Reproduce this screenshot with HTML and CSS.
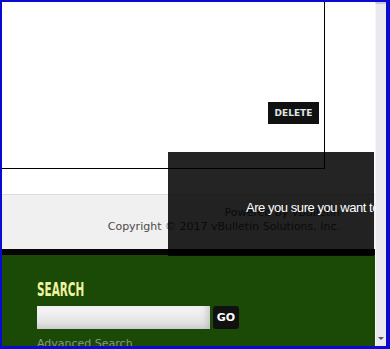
FILE: index.html
```html
<!DOCTYPE html>
<html lang="en">
<head>
    <meta charset="UTF-8">
    <title>Forum - Delete</title>
    <link rel="stylesheet" href="styles.css">
</head>
<body>
    <div class="frame">
        <div class="page">
            <div class="main-area">
                <div class="post-box">
                    <button class="delete-button">DELETE</button>
                </div>
            </div>
            <div class="footer-light">
                <div class="footer-line">Powered by vBulletin</div>
                <div class="footer-line">Copyright &copy; 2017 vBulletin Solutions, Inc.</div>
            </div>
            <div class="footer-band"></div>
            <div class="footer-green">
                <div class="search-title">SEARCH</div>
                <div class="search-row">
                    <input type="text" class="search-input">
                    <button class="go-button">GO</button>
                </div>
                <div class="adv-search">Advanced Search</div>
            </div>
            <!-- confirm dialog sits over the page -->
            <div class="confirm-overlay">
                <div class="confirm-text">Are you sure you want to delete this message?</div>
            </div>
        </div>
        <div class="scrollbar">
            <div class="scroll-arrow"></div>
        </div>
    </div>
</body>
</html>
```

FILE: styles.css
```css
body {
    margin: 0;
    padding: 0;
    font-family: "DejaVu Sans", Verdana, sans-serif;
    background: #ffffff;
}
.frame {
    width: 390px;
    height: 349px;
    box-sizing: border-box;
    border-style: solid;
    border-color: #0a0ad2;
    border-width: 2px 4px 3px 2px;
    display: flex;
    overflow: hidden;
}
.page {
    position: relative;
    width: 373px;
    height: 344px;
    overflow: hidden;
    display: flex;
    flex-direction: column;
}
.main-area {
    height: 192px;
    flex-shrink: 0;
    background: #ffffff;
}
.post-box {
    width: 323px;
    height: 167px;
    box-sizing: border-box;
    border-right: 1px solid #000;
    border-bottom: 1px solid #000;
    display: flex;
    justify-content: flex-end;
    align-items: flex-start;
    padding: 100px 5px 0 0;
}
.delete-button {
    background: #111111;
    color: #dfe6e6;
    border: none;
    font-family: "DejaVu Sans", sans-serif;
    font-weight: bold;
    font-size: 9px;
    width: 51px;
    height: 22px;
    padding: 0;
}
.footer-light {
    height: 55px;
    flex-shrink: 0;
    box-sizing: border-box;
    background: #f0f0f0;
    border-top: 1px solid #dddddd;
    text-align: right;
    padding: 11px 35px 0 0;
    font-size: 11px;
    line-height: 14px;
    color: #4a4a4a;
}
.footer-band {
    height: 6px;
    flex-shrink: 0;
    background: #050505;
}
.footer-green {
    flex: 1;
    min-height: 0;
    overflow: hidden;
    background: #1a4a06;
    padding: 24px 0 0 35px;
}
.search-title {
    font-family: "DejaVu Sans Condensed", sans-serif;
    font-weight: bold;
    font-size: 20px;
    line-height: 20px;
    color: #eef2a0;
    transform: scaleX(0.58);
    transform-origin: left;
}
.search-row {
    display: flex;
    gap: 3px;
    margin-top: 7px;
}
.search-input {
    width: 173px;
    height: 23px;
    border: none;
    padding: 0;
    box-sizing: border-box;
    background: linear-gradient(to bottom, #f8f8f8, #e4e4e4 70%, #cfcfcf);
    box-shadow: inset -6px 0 8px -4px #bdbdbd;
}
.go-button {
    width: 26px;
    height: 23px;
    background: #111111;
    color: #ffffff;
    border: none;
    border-radius: 3px;
    padding: 0;
    font-family: "DejaVu Sans", sans-serif;
    font-weight: bold;
    font-size: 11px;
}
.adv-search {
    margin-top: 8px;
    font-size: 11px;
    color: #8a9884;
}
.confirm-overlay {
    position: absolute;
    left: 166px;
    top: 150px;
    width: 206px;
    height: 104px;
    background: rgba(0, 0, 0, 0.86);
    overflow: hidden;
}
.confirm-text {
    white-space: nowrap;
    color: #ffffff;
    font-family: "Liberation Sans", Arial, sans-serif;
    font-size: 13px;
    letter-spacing: -0.45px;
    padding: 48px 0 0 78px;
}
.scrollbar {
    width: 11px;
    height: 344px;
    background: #e9e9ef;
    border-left: 1px solid #f6f6f6;
    border-top: 2px solid #c8c8dc;
    box-sizing: border-box;
    display: flex;
    flex-direction: column;
    justify-content: flex-end;
    align-items: center;
    padding-bottom: 6px;
}
.scroll-arrow {
    width: 0;
    height: 0;
    border-left: 3px solid transparent;
    border-right: 3px solid transparent;
    border-top: 3px solid #555;
}
```
